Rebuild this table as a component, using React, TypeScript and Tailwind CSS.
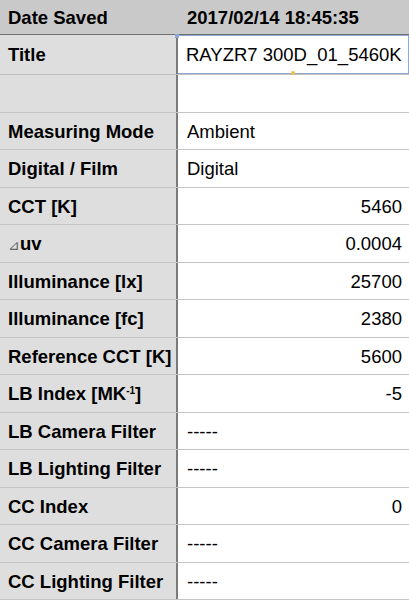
import React from "react";

type Row = { label: React.ReactNode; value: string; align: "left" | "right" };

const rows: Row[] = [
  { label: "", value: "", align: "left" },
  { label: "Measuring Mode", value: "Ambient", align: "left" },
  { label: "Digital / Film", value: "Digital", align: "left" },
  { label: "CCT [K]", value: "5460", align: "right" },
  {
    label: (
      <span>
        <span className="text-[14px] font-normal text-[#666]">⊿</span>uv
      </span>
    ),
    value: "0.0004",
    align: "right",
  },
  { label: "Illuminance [lx]", value: "25700", align: "right" },
  { label: "Illuminance [fc]", value: "2380", align: "right" },
  { label: "Reference CCT [K]", value: "5600", align: "right" },
  {
    label: (
      <span>
        LB Index [MK<span className="text-[10px] relative -top-[6px]">-1</span>]
      </span>
    ),
    value: "-5",
    align: "right",
  },
  { label: "LB Camera Filter", value: "-----", align: "left" },
  { label: "LB Lighting Filter", value: "-----", align: "left" },
  { label: "CC Index", value: "0", align: "right" },
  { label: "CC Camera Filter", value: "-----", align: "left" },
  { label: "CC Lighting Filter", value: "-----", align: "left" },
];

export default function App() {
  return (
    <div
      className="w-[409px] h-[600px] overflow-hidden bg-white text-black text-[18.5px] leading-none"
      style={{ fontFamily: '"Liberation Sans", Arial, sans-serif' }}
    >
      {/* Header */}
      <div className="flex h-[35px] bg-[#c9c9c9] border-b border-[#6f6f6f]">
        <div className="w-[176px] flex items-center pl-[8px] pt-[2px] font-bold">Date Saved</div>
        <div className="w-[2px] bg-[#c9c9c9]" />
        <div className="flex-1 flex items-center pl-[9px] pt-[2px] font-bold">2017/02/14 18:45:35</div>
      </div>
      {/* Title row */}
      <div className="flex h-[40px] border-b border-[#bdbdbd]">
        <div className="w-[176px] bg-[#dedede] flex items-center pl-[8px] pt-[2px] font-bold">Title</div>
        <div className="w-[2px] bg-[#7b7b7b]" />
        <div className="relative flex-1 flex items-center pl-[8px] pt-[2px] border border-l-0 border-[#8fa9d1] bg-white">
          RAYZR7 300D_01_5460K
          <div className="absolute -left-[3px] -top-[2px] w-[4px] h-[4px] bg-[#8fa9d1]" />
          <div className="absolute left-[113px] -bottom-[2px] w-[4px] h-[4px] rounded-full bg-[#f2c040]" />
        </div>
      </div>
      {rows.map((r, i) => (
        <div key={i} className="flex h-[37.5px] border-b border-[#c4c4c4]">
          <div className="w-[176px] bg-[#dedede] flex items-center pl-[8px] pt-[2px] font-bold whitespace-nowrap">
            {r.label}
          </div>
          <div className="w-[2px] bg-[#7b7b7b]" />
          <div
            className={
              r.align === "right"
                ? "flex-1 flex items-center justify-end pr-[7px] pt-[2px]"
                : "flex-1 flex items-center pl-[9px] pt-[2px]"
            }
          >
            {r.value}
          </div>
        </div>
      ))}
    </div>
  );
}
